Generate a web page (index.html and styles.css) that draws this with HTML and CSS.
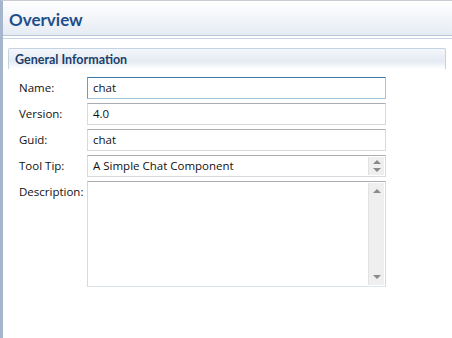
FILE: index.html
```html
<!DOCTYPE html>
<html lang="en">
<head>
    <meta charset="UTF-8">
    <title>Overview</title>
    <link rel="stylesheet" href="styles.css">
</head>
<body>
    <div class="editor">
        <div class="page-header">
            <h1>Overview</h1>
        </div>

        <div class="section">
            <div class="section-title">General Information</div>
            <div class="form">
                <label>Name:</label>
                <div class="field focused">chat</div>

                <label>Version:</label>
                <div class="field">4.0</div>

                <label>Guid:</label>
                <div class="field">chat</div>

                <label>Tool Tip:</label>
                <div class="field with-scroll">
                    <span class="value">A Simple Chat Component</span>
                    <div class="scrollbar small">
                        <span class="arrow up"></span>
                        <span class="arrow down"></span>
                    </div>
                </div>

                <label>Description:</label>
                <div class="field area with-scroll">
                    <span class="value"></span>
                    <div class="scrollbar">
                        <span class="arrow up"></span>
                        <span class="arrow down"></span>
                    </div>
                </div>
            </div>
        </div>
    </div>
</body>
</html>
```

FILE: styles.css
```css
body {
    margin: 0;
    font-family: "Open Sans", "Liberation Sans", sans-serif;
    background-color: white;
}

.editor {
    width: 452px;
    height: 338px;
    box-sizing: border-box;
    border-left: 3px solid #a5b5cc;
    border-top: 1px solid #c8ccd2;
    background-color: white;
}

.page-header {
    height: 34px;
    background: linear-gradient(to bottom, #ffffff, #e6ebf3);
    border-bottom: 1px solid #b8c7d9;
    box-shadow: 0 2px 0 #ffffff, 0 3px 0 #c9d5e3;
}

h1 {
    margin: 0;
    padding: 8px 0 0 6px;
    font-family: Lato, "Liberation Sans", sans-serif;
    font-size: 17px;
    font-weight: bold;
    color: #1f4e8a;
}

.section {
    margin: 12px 6px 0 5px;
}

.section-title {
    height: 20px;
    line-height: 21px;
    padding-left: 6px;
    font-family: Lato, "Liberation Sans", sans-serif;
    font-size: 12.5px;
    font-weight: bold;
    color: #1c3f6a;
    border: 1px solid #c4d3e3;
    border-bottom: none;
    border-radius: 2px 2px 0 0;
    background: linear-gradient(to bottom, #f4f7fb, #e4ebf3 60%, #ffffff);
}

.form {
    display: grid;
    grid-template-columns: 68px 299px;
    row-gap: 4px;
    padding: 8px 0 0 11px;
}

.form label {
    font-size: 11.5px;
    color: #111111;
    line-height: 22px;
}

.field {
    height: 22px;
    box-sizing: border-box;
    border: 1px solid #d6dade;
    border-top-color: #abadb3;
    padding: 0 5px;
    font-size: 11.5px;
    line-height: 20px;
    color: #111111;
    background-color: white;
}

.field.focused {
    border-color: #a3c5e2;
    border-top-color: #3d7bad;
    border-left-color: #6d9cc6;
}

.field.with-scroll {
    display: flex;
    padding-right: 1px;
}

.field .value {
    flex: 1;
}

.field.area {
    height: 106px;
    border-bottom-color: #dce4ee;
}

.scrollbar {
    width: 15px;
    margin: 1px 0;
    background-color: #efefef;
    border-left: 1px solid #e2e2e2;
    display: flex;
    flex-direction: column;
    justify-content: space-between;
    align-items: center;
    padding: 6px 0;
}

.scrollbar.small {
    padding: 3px 0 0;
    justify-content: flex-start;
    gap: 4px;
}

.arrow {
    width: 0;
    height: 0;
    border-left: 4px solid transparent;
    border-right: 4px solid transparent;
}

.arrow.up {
    border-bottom: 4px solid #8a8a8a;
}

.arrow.down {
    border-top: 4px solid #8a8a8a;
}
```
